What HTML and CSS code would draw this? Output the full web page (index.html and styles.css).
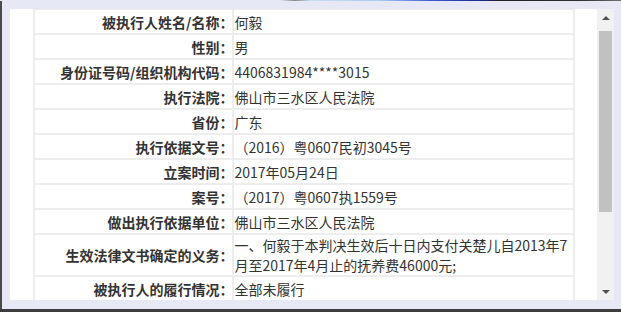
FILE: index.html
```html
<!DOCTYPE html>
<html lang="zh-CN">
<head>
<meta charset="utf-8">
<title>被执行人信息</title>
<link rel="stylesheet" href="styles.css">
</head>
<body>
<div class="screen">
  <div class="topline"></div>
  <div class="middle">
    <div class="leftedge"></div>
    <div class="frame">
      <div class="panel">
        <div class="content">
          <table class="info">
            <tr><td class="label">被执行人姓名/名称<span class="colon">：</span></td><td class="value">何毅</td></tr>
            <tr><td class="label">性别<span class="colon">：</span></td><td class="value">男</td></tr>
            <tr><td class="label">身份证号码/组织机构代码<span class="colon">：</span></td><td class="value">4406831984****3015</td></tr>
            <tr><td class="label">执行法院<span class="colon">：</span></td><td class="value">佛山市三水区人民法院</td></tr>
            <tr><td class="label">省份<span class="colon">：</span></td><td class="value">广东</td></tr>
            <tr><td class="label">执行依据文号<span class="colon">：</span></td><td class="value">（2016）粤0607民初3045号</td></tr>
            <tr><td class="label">立案时间<span class="colon">：</span></td><td class="value">2017年05月24日</td></tr>
            <tr><td class="label">案号<span class="colon">：</span></td><td class="value">（2017）粤0607执1559号</td></tr>
            <tr><td class="label">做出执行依据单位<span class="colon">：</span></td><td class="value">佛山市三水区人民法院</td></tr>
            <tr><td class="label">生效法律文书确定的义务<span class="colon">：</span></td><td class="value">一、何毅于本判决生效后十日内支付关楚儿自2013年7月至2017年4月止的抚养费46000元;</td></tr>
            <tr><td class="label">被执行人的履行情况<span class="colon">：</span></td><td class="value">全部未履行</td></tr>
          </table>
        </div>
        <div class="scrollbar">
          <div class="sb-btn"><span class="arrow-up"></span></div>
          <div class="sb-track"><div class="sb-thumb"></div></div>
          <div class="sb-btn"><span class="arrow-down"></span></div>
        </div>
      </div>
    </div>
  </div>
  <div class="bottomedge"></div>
</div>
</body>
</html>
```

FILE: styles.css
```css
html, body {
  margin: 0;
  padding: 0;
}
body {
  background: #e6e8f5;
  font-family: "Noto Sans CJK SC", "Noto Sans", sans-serif;
}
.screen {
  width: 621px;
  height: 312px;
  display: flex;
  flex-direction: column;
  overflow: hidden;
}
.topline {
  height: 1px;
  flex: none;
  background: linear-gradient(to right, #e6e8f5 0, #e6e8f5 280px, #8a8a8a 295px, #c9dcf2 310px, #a8cdf0 380px, #3c5cd0 430px, #1a2a90 480px, #202020 500px, #303030 580px, #707070 621px);
}
.middle {
  flex: 1;
  display: flex;
  min-height: 0;
}
.leftedge {
  width: 2px;
  flex: none;
  background: #4a4a4a;
}
.frame {
  flex: 1;
  padding: 8px 7px 9px 8px;
}
.panel {
  height: 291px;
  display: flex;
  background: #fff;
}
.content {
  flex: 1;
  overflow: hidden;
  background: #fff;
}
.bottomedge {
  height: 3px;
  flex: none;
  background: #3c3c3c;
}
.info {
  width: 541px;
  margin: -1px auto 0;
  border-collapse: separate;
  border-spacing: 2px;
  background: #ededed;
  table-layout: fixed;
  font-size: 14px;
  line-height: 20px;
  color: #333;
}
.info td {
  background: #fff;
  height: 23px;
  padding: 0;
  vertical-align: middle;
}
.label {
  width: 197px;
  text-align: right;
  font-weight: bold;
  white-space: nowrap;
}
.colon {
  font-family: "Noto Sans CJK TC", "Noto Sans CJK SC", sans-serif;
  margin-right: -2px;
}
.value {
  width: 338px;
  text-align: left;
  padding-left: 1px !important;
}
.scrollbar {
  width: 17px;
  flex: none;
  background: #f1f1f1;
  display: flex;
  flex-direction: column;
}
.sb-btn {
  height: 17px;
  flex: none;
  display: flex;
  align-items: center;
  justify-content: center;
}
.sb-track {
  flex: 1;
  padding-top: 5px;
}
.sb-thumb {
  width: 13px;
  height: 181px;
  margin: 0 2px;
  background: #c1c1c1;
}
.arrow-up {
  width: 0;
  height: 0;
  border-left: 4px solid transparent;
  border-right: 4px solid transparent;
  border-bottom: 4px solid #505050;
}
.arrow-down {
  width: 0;
  height: 0;
  border-left: 4px solid transparent;
  border-right: 4px solid transparent;
  border-top: 4px solid #505050;
}
```
